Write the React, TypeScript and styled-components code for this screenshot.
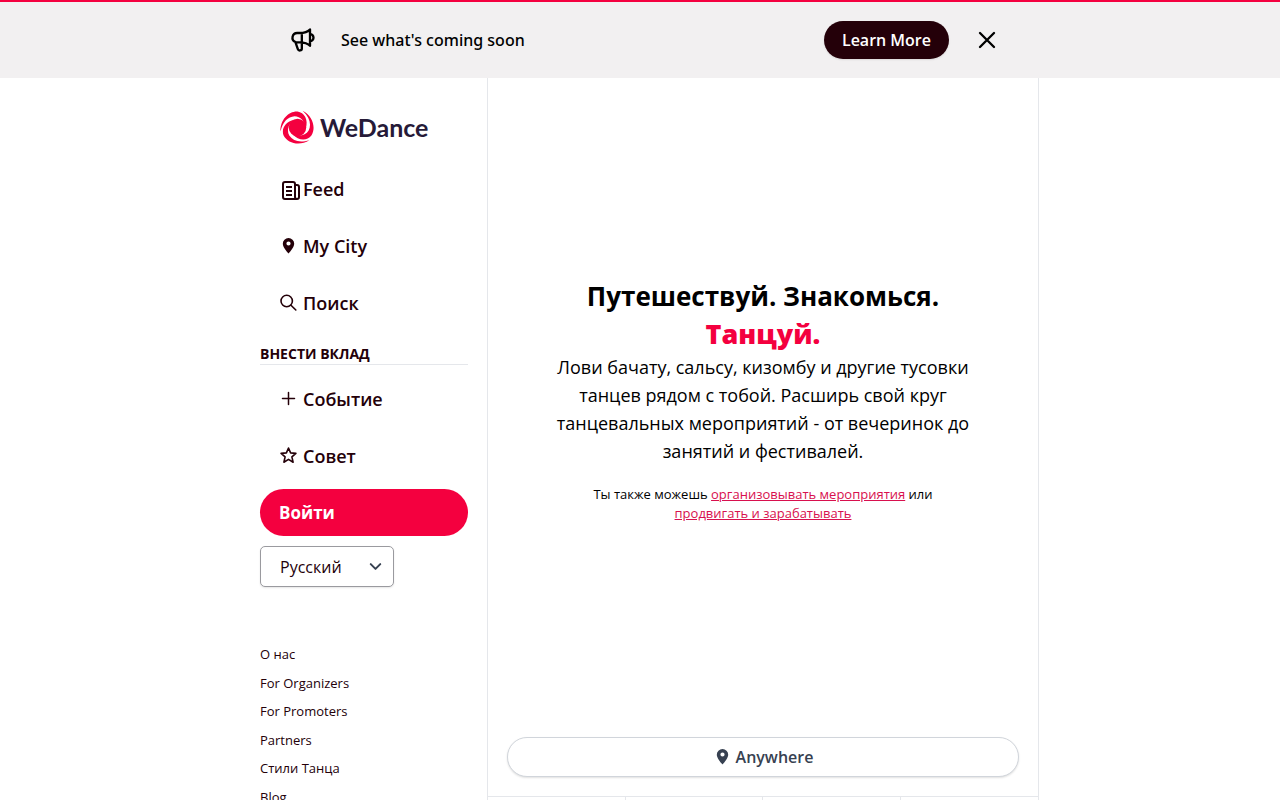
import React from "react";
import styled, { createGlobalStyle } from "styled-components";

const GlobalStyle = createGlobalStyle`
  *, *::before, *::after { box-sizing: border-box; }
  body {
    margin: 0;
    background: #fff;
    color: #000;
    font-family: "Open Sans", "Noto Sans", sans-serif;
    font-size: 18px;
  }
  a { color: inherit; text-decoration: none; }
  button, select { font-family: inherit; cursor: pointer; }
  svg { display: block; flex: none; }
`;

const Banner = styled.header`
  border-top: 2px solid #f4003f;
  background: #f2f0f1;
  padding: 19px;
`;

const BannerInner = styled.div`
  display: flex;
  align-items: center;
  max-width: 722px;
  min-height: 38px;
  margin: 0 auto;
  padding-left: 10px;
`;

const BannerText = styled.p`
  flex: 1;
  margin: 0 0 0 24px;
  font-family: "Noto Sans", "Open Sans", sans-serif;
  font-size: 16px;
  line-height: 24px;
  font-weight: 500;
`;

const LearnMore = styled.a`
  padding: 7px 18px;
  border-radius: 19px;
  background: #240009;
  color: #fff;
  font-size: 16px;
  line-height: 24px;
  font-weight: 600;
  box-shadow: 0 1px 2px rgba(0, 0, 0, 0.1);
`;

const CloseButton = styled.button`
  margin-left: 24px;
  padding: 0;
  border: 0;
  background: none;
  color: #000;
`;

const Page = styled.div`
  display: flex;
  max-width: 798px;
  margin: 0 auto;
`;

const Sidebar = styled.aside`
  flex: 0 0 246px;
  padding: 28px 19px;
`;

const Logo = styled.a`
  display: flex;
  align-items: center;
  gap: 5px;
  height: 42px;
  margin-bottom: 17px;
  padding-left: 20px;
  color: #261a38;
  font-family: Lato, sans-serif;
  font-size: 25px;
  font-weight: 700;
`;

const NavList = styled.nav`
  display: flex;
  flex-direction: column;
  gap: 10px;
`;

const NavItem = styled.a`
  display: flex;
  align-items: center;
  height: 47px;
  padding: 0 19px;
  color: #240009;
  font-size: 18px;
  font-weight: 600;
`;

const NavIcon = styled.span`
  display: flex;
  flex: none;
  width: 24px;
`;

const SectionTitle = styled.h2`
  margin: 18px 0 10px;
  border-bottom: 1px solid #e5e7eb;
  color: #240009;
  font-size: 14px;
  line-height: 20px;
  font-weight: 700;
  text-transform: uppercase;
`;

const LoginButton = styled.button`
  width: 100%;
  height: 47px;
  margin-top: 10px;
  padding: 0 19px;
  border: 0;
  border-radius: 24px;
  background: #f4003f;
  color: #fff;
  font-size: 17px;
  font-weight: 700;
  text-align: left;
`;

const LanguageField = styled.div`
  display: grid;
  align-items: center;
  width: 134px;
  margin-top: 10px;
  svg {
    grid-area: 1 / 1;
    justify-self: end;
    margin-right: 9px;
    pointer-events: none;
  }
`;

const LanguageSelect = styled.select`
  grid-area: 1 / 1;
  width: 100%;
  height: 41px;
  padding: 0 19px;
  border: 1px solid #9a9a9f;
  border-radius: 5px;
  background: #fff;
  color: #240009;
  font-size: 16px;
  appearance: none;
  box-shadow: 0 1px 2px rgba(0, 0, 0, 0.1);
`;

const FooterLinks = styled.ul`
  margin: 51px 0 0;
  padding: 0;
  list-style: none;
  font-size: 19px;
  line-height: 1.5;
  a {
    color: #240009;
    font-size: 13px;
  }
`;

const Main = styled.main`
  flex: 1;
  min-width: 0;
  border: solid #e5e7eb;
  border-width: 0 1px;
`;

const Hero = styled.section`
  display: flex;
  flex-direction: column;
  align-items: center;
  justify-content: center;
  min-height: 80vh;
  padding: 4px 57px 0;
  text-align: center;
`;

const Headline = styled.h1`
  margin: 0;
  font-size: 26px;
  line-height: 38px;
  font-weight: 700;
  strong {
    display: block;
    color: #f4003f;
    font-size: 27px;
    font-weight: 800;
  }
`;

const Lead = styled.p`
  margin: 0;
  font-size: 18px;
  line-height: 28px;
`;

const Note = styled.p`
  max-width: 380px;
  margin: 20px 0 0;
  font-size: 13px;
  line-height: 19px;
  a {
    color: #d8104e;
    text-decoration: underline;
  }
`;

const Filter = styled.div`
  padding: 19px;
  border-bottom: 1px solid #e5e7eb;
`;

const PlaceButton = styled.button`
  display: flex;
  align-items: center;
  justify-content: center;
  gap: 5px;
  width: 100%;
  height: 40px;
  border: 1px solid #d1d5db;
  border-radius: 20px;
  background: #fff;
  color: #374151;
  font-size: 16px;
  font-weight: 600;
  box-shadow: 0 1px 2px rgba(0, 0, 0, 0.12);
`;

const Days = styled.div`
  display: grid;
  grid-template-columns: repeat(4, 1fr);
`;

const Day = styled.div`
  height: 76px;
  border-right: 1px solid #e5e7eb;
  &:last-child { border-right: 0; }
`;

const stroke = {
  fill: "none",
  stroke: "currentColor",
  strokeLinecap: "round",
  strokeLinejoin: "round",
} as const;

const MegaphoneIcon = () => (
  <svg width="28" height="28" viewBox="0 0 24 24" strokeWidth="2" {...stroke} aria-hidden="true">
    <path d="M11 5.882V19.24a1.76 1.76 0 01-3.417.592l-2.147-6.15M18 13a3 3 0 100-6M5.436 13.683A4.001 4.001 0 017 6h1.832c4.1 0 7.625-1.234 9.168-3v14c-1.543-1.766-5.067-3-9.168-3H7a3.988 3.988 0 01-1.564-.317z" />
  </svg>
);

const CloseIcon = () => (
  <svg width="28" height="28" viewBox="0 0 24 24" strokeWidth="2" {...stroke} aria-hidden="true">
    <path d="M6 18L18 6M6 6l12 12" />
  </svg>
);

const FeedIcon = () => (
  <svg width="22" height="22" viewBox="-1 -3 22 22" strokeWidth="2" {...stroke} aria-hidden="true">
    <path d="M15 16V3a2 2 0 00-2-2H5a2 2 0 00-2 2v13a2 2 0 002 2h12a2 2 0 002-2V6a2 2 0 00-2-2h-2M15 16a2 2 0 002 2" />
    <path strokeLinecap="butt" d="M6 6h6M6 10h6M6 14h6" />
  </svg>
);

const PinIcon = () => (
  <svg width="18" height="18" viewBox="0 0 18 18" fill="currentColor" aria-hidden="true">
    <path fillRule="evenodd" d="M9.500 1a5.700 5.700 0 00-5.700 5.700C3.800 10.500 9.500 16.500 9.500 16.500s5.700-6 5.700-9.800A5.700 5.700 0 009.500 1zm0 7.600a2.100 2.100 0 110-4.200 2.100 2.100 0 010 4.200z" />
  </svg>
);

const SearchIcon = () => (
  <svg width="18" height="18" viewBox="0 0 18 18" strokeWidth="1.600" {...stroke} aria-hidden="true">
    <circle cx="7.700" cy="7" r="5.700" />
    <path d="M12 11.200L16.800 16" />
  </svg>
);

const PlusIcon = () => (
  <svg width="18" height="18" viewBox="0 0 18 18" strokeWidth="1.500" {...stroke} aria-hidden="true">
    <path d="M9.500 2.500v12M3.500 8.500h12" />
  </svg>
);

const StarIcon = () => (
  <svg width="18" height="18" viewBox="0 0 18 18" strokeWidth="1.600" {...stroke} aria-hidden="true">
    <path d="M9.500 1l2.100 4.900 5.300.5-4 3.500 1.200 5.300-4.600-2.800-4.600 2.800 1.200-5.300-4-3.500 5.300-.5z" />
  </svg>
);

const ChevronIcon = () => (
  <svg width="19" height="19" viewBox="0 0 24 24" strokeWidth="2.500" {...stroke} color="#374151" aria-hidden="true">
    <path d="M6 9l6 6 6-6" />
  </svg>
);

const LogoMark = () => (
  <svg width="35" height="35" viewBox="0 0 36 36" fill="#f4003f" aria-hidden="true">
    <circle cx="18" cy="18" r="9" />
    {[0, 120, 240].map((angle) => (
      <path
        key={angle}
        transform={`rotate(${angle} 18 18)`}
        d="M0.500 22C0 10 9 1 18 1.500C25 2.500 29.500 10 26.500 19C26 12 21 6.500 15 6.500C8 7 3 12 0.500 22Z"
      />
    ))}
  </svg>
);

const mainLinks = [
  { label: "Feed", icon: <FeedIcon /> },
  { label: "My City", icon: <PinIcon /> },
  { label: "Поиск", icon: <SearchIcon /> },
];

const contributeLinks = [
  { label: "Событие", icon: <PlusIcon /> },
  { label: "Совет", icon: <StarIcon /> },
];

const footerLinks = ["О нас", "For Organizers", "For Promoters", "Partners", "Стили Танца", "Blog"];

const NavGroup = ({ items }: { items: { label: string; icon: React.ReactNode }[] }) => (
  <NavList>
    {items.map(({ label, icon }) => (
      <NavItem href="#" key={label}>
        <NavIcon>{icon}</NavIcon>
        {label}
      </NavItem>
    ))}
  </NavList>
);

export default function App() {
  return (
    <>
      <GlobalStyle />
      <Banner>
        <BannerInner>
          <MegaphoneIcon />
          <BannerText>See what's coming soon</BannerText>
          <LearnMore href="#">Learn More</LearnMore>
          <CloseButton type="button" aria-label="Close">
            <CloseIcon />
          </CloseButton>
        </BannerInner>
      </Banner>
      <Page>
        <Sidebar>
          <Logo href="#">
            <LogoMark />
            WeDance
          </Logo>
          <NavGroup items={mainLinks} />
          <SectionTitle>Внести вклад</SectionTitle>
          <NavGroup items={contributeLinks} />
          <LoginButton type="button">Войти</LoginButton>
          <LanguageField>
            <LanguageSelect aria-label="Язык" defaultValue="ru">
              <option value="ru">Русский</option>
            </LanguageSelect>
            <ChevronIcon />
          </LanguageField>
          <FooterLinks>
            {footerLinks.map((label) => (
              <li key={label}>
                <a href="#">{label}</a>
              </li>
            ))}
          </FooterLinks>
        </Sidebar>
        <Main>
          <Hero>
            <Headline>
              Путешествуй. Знакомься. <strong>Танцуй.</strong>
            </Headline>
            <Lead>
              Лови бачату, сальсу, кизомбу и другие тусовки танцев рядом с тобой. Расширь свой круг
              танцевальных мероприятий - от вечеринок до занятий и фестивалей.
            </Lead>
            <Note>
              Ты также можешь <a href="#">организовывать мероприятия</a> или{" "}
              <a href="#">продвигать и зарабатывать</a>
            </Note>
          </Hero>
          <Filter>
            <PlaceButton type="button">
              <PinIcon />
              Anywhere
            </PlaceButton>
          </Filter>
          <Days>
            <Day />
            <Day />
            <Day />
            <Day />
          </Days>
        </Main>
      </Page>
    </>
  );
}
